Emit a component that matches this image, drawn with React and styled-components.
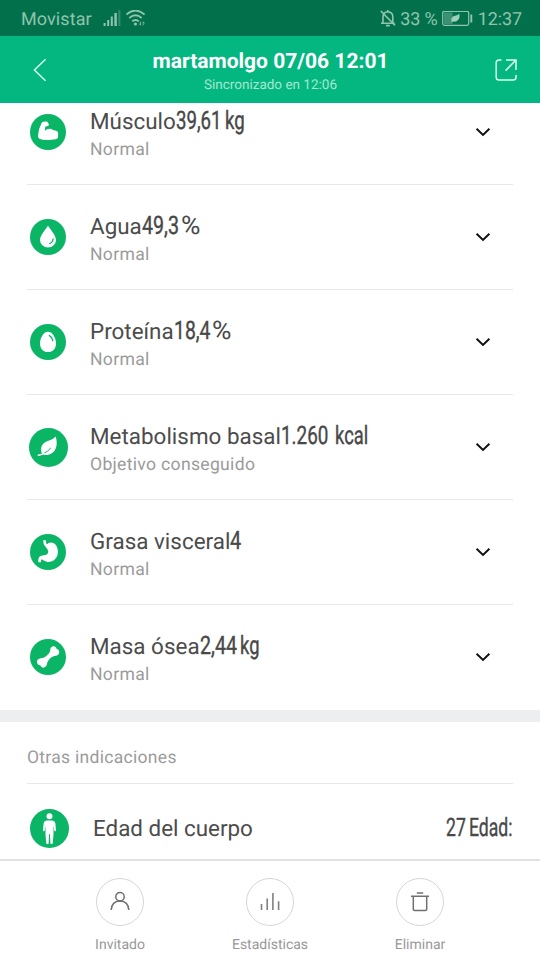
import React from 'react';
import styled, { createGlobalStyle } from 'styled-components';

const GlobalStyle = createGlobalStyle`
  * {
    box-sizing: border-box;
  }

  body {
    margin: 0;
    background: #fff;
    font-family: Roboto, 'Liberation Sans', sans-serif;
    text-rendering: geometricPrecision;
  }

  svg {
    display: block;
    flex-shrink: 0;
  }
`;

const Screen = styled.div`
  width: 540px;
  height: 960px;
  display: flex;
  flex-direction: column;
  overflow: hidden;
  background: #fff;
`;

// Phone status bar
const StatusBar = styled.div`
  height: 36px;
  flex-shrink: 0;
  display: flex;
  align-items: center;
  justify-content: space-between;
  padding: 2px 18px 0 21px;
  background: #02704b;
  color: #8fc4ae;
  font-size: 18px;
`;

const StatusGroup = styled.div`
  display: flex;
  align-items: center;
`;

const Carrier = styled.span`
  width: 82px;
  letter-spacing: 0.1px;
`;

const SignalSlot = styled.span`
  margin-right: 5px;
`;

const Percent = styled.span`
  margin: 0 4px 0 4px;
  letter-spacing: -0.1px;
`;

const Clock = styled.span`
  margin-left: 5px;
  letter-spacing: -0.1px;
`;

// Green header
const Header = styled.header`
  height: 67px;
  flex-shrink: 0;
  display: flex;
  align-items: center;
  justify-content: space-between;
  padding: 0 22px 0 31px;
  background: #04b67f;
`;

const HeaderText = styled.div`
  text-align: center;
  padding: 5px 2px 0 0;
`;

const HeaderTitle = styled.h1`
  margin: 0;
  color: #fff;
  font-size: 21px;
  line-height: 26px;
  font-weight: 700;
`;

const HeaderSub = styled.div`
  color: #a5e8cf;
  font-size: 13.5px;
  line-height: 20px;
`;

// Scrolled list of measurements
const Content = styled.main`
  flex: 1;
  min-height: 0;
  overflow: hidden;
`;

const MetricList = styled.div`
  margin-top: -23px;
  padding: 0 27px;
`;

const MetricRow = styled.div`
  height: 105px;
  display: flex;
  align-items: center;
  padding-right: 21px;
  border-bottom: 1px solid #e8e8e8;

  &:last-child {
    border-bottom-color: transparent;
  }
`;

const IconSlot = styled.div`
  width: ${(props) => props.$width || 63}px;
  display: flex;
  padding-left: ${(props) => props.$left || 0}px;
`;

const MetricText = styled.div`
  flex: 1;
  padding-top: 3px;
`;

const MetricTitle = styled.div`
  height: 28px;
  margin-bottom: 4px;
  display: flex;
  align-items: baseline;
  color: #4c4c4c;
  font-size: 22.4px;
  line-height: 28px;
`;

const MetricName = styled.span`
  letter-spacing: 0.02px;
`;

const MetricStatus = styled.div`
  color: #9b9b9b;
  font-size: 17.6px;
  line-height: 22px;
  letter-spacing: 0.3px;
`;

// Narrow figures, squeezed to the given width
const Narrow = styled.span`
  width: ${(props) => props.$width}px;
  margin-left: ${(props) => props.$gap || 0}px;
  color: #484848;
  font-size: 25.5px;
  line-height: 28px;
  white-space: nowrap;
  -webkit-text-stroke: ${(props) => (props.$scale < 1 ? 0.4 : 0)}px #484848;

  span {
    display: inline-block;
    transform: scaleX(${(props) => props.$scale});
    transform-origin: 0 50%;
  }
`;

const Band = styled.div`
  height: 12px;
  background: #edeef0;
`;

const Others = styled.section`
  padding: 0 27px;
`;

const OthersTitle = styled.h2`
  height: 62px;
  margin: 0;
  padding-top: 11px;
  border-bottom: 1px solid #e8e8e8;
  color: #9b9b9b;
  font-size: 17.5px;
  line-height: 50px;
  font-weight: 400;
  letter-spacing: 0.3px;
`;

const AgeRow = styled.div`
  height: 88px;
  display: flex;
  align-items: center;
  color: #4c4c4c;
  font-size: 22.4px;
`;

const AgeName = styled.div`
  flex: 1;
  padding-top: 2px;
`;

const AgeValue = styled.div`
  display: flex;
`;

// Bottom actions
const BottomBar = styled.footer`
  height: 101px;
  flex-shrink: 0;
  display: flex;
  justify-content: center;
  border-top: 2px solid #e1e1e1;
  background: #fff;
`;

const Action = styled.div`
  width: 150px;
  display: flex;
  flex-direction: column;
  align-items: center;
  padding-top: 17px;
`;

const ActionCircle = styled.div`
  width: 48px;
  height: 48px;
  border: 1px solid #d6d6d6;
  border-radius: 50%;
  display: flex;
  align-items: center;
  justify-content: center;
`;

const ActionLabel = styled.div`
  margin-top: 10px;
  color: #999;
  font-size: 14px;
  line-height: 18px;
`;

const NarrowText = ({ text, width, scale, gap }) => (
  <Narrow $width={width} $scale={scale} $gap={gap}>
    <span>{text}</span>
  </Narrow>
);

const Badge = ({ size = 36, children }) => (
  <svg width={size} height={size} viewBox={`${-size / 2} ${-size / 2} ${size} ${size}`}>
    <circle r={size / 2} fill="#0ab566" />
    {children}
  </svg>
);

const icons = {
  muscle: (
    <path
      fill="#fff"
      d="M-5.2 -10.2 L-1.4 -10.5 Q-.2 -10.3 .2 -9 L.9 -7.2 Q.9 -6.2 -.2 -6 L-2.8 -5.2 L-3.1 -1.2 Q-1 -3.4 2 -3.3 Q4.2 -3.1 5.4 -1.7 Q9.8 -1.6 10.1 1 V5 Q10 7 7.6 7.2 Q3 8.1 -1 8 Q-6 8 -8.6 6.8 Q-10.2 6 -10 3.8 Q-9.7 -3 -6.8 -8 Q-6.2 -9.7 -5.2 -10.2 Z"
    />
  ),
  water: (
    <>
      <path fill="#fff" d="M0 -11.2 C2.6 -7.4 8 -1.2 8 3 A8 7.4 0 0 1 -8 3 C-8 -1.2 -2.6 -7.4 0 -11.2 Z" />
      <path d="M1.8 6.6 Q4.6 5.5 5.1 2" fill="none" stroke="#0ab566" strokeWidth="1.3" strokeLinecap="round" />
    </>
  ),
  protein: (
    <>
      <path fill="#fff" d="M0 -10.3 C4.6 -10.3 8 -3.8 8 1.2 C8 6.6 4.8 10 0 10 C-4.8 10 -8 6.6 -8 1.2 C-8 -3.8 -4.6 -10.3 0 -10.3 Z" />
      <path d="M1.4 -6.4 Q4.2 -5 4.7 -1.5" fill="none" stroke="#0ab566" strokeWidth="1.4" strokeLinecap="round" />
    </>
  ),
  leaf: (
    <>
      <path fill="#fff" d="M7.2 -11 C9.4 -4 8.6 5.8 -1 7.4 Q-4.4 7.9 -6.5 6.5 C-9.2 -.8 -5.6 -4.8 0 -6.7 Q4.8 -8.2 7.2 -11 Z" />
      <path fill="none" stroke="#0ab566" strokeWidth="1" d="M-5.2 6.2 Q-.4 4 2.4 .4" />
      <path fill="none" stroke="#fff" strokeWidth="1.5" strokeLinecap="round" d="M-10.2 7.7 Q-7.2 7.5 -4.4 5.6" />
    </>
  ),
  stomach: (
    <>
      <path
        fill="#fff"
        d="M-1.6 -7.2 Q.8 -10 4.4 -9.3 C8.4 -8.2 9.9 -4 9.9 0 C9.8 6.2 5.4 10 0 9.9 C-3 9.7 -4.6 7.8 -6.2 7.2 Q-7.2 7.4 -7 10.2 H-9.7 Q-10.2 4.6 -6.8 3.8 C-3 3.2 .3 3 .2 -.4 Q-.1 -3.4 -2.4 -5 Z"
      />
      <path fill="none" stroke="#fff" strokeWidth="2.6" d="M-3.3 -11.8 Q-3.9 -7.7 -.8 -5.8" />
    </>
  ),
  bone: (
    <path
      fill="#fff"
      d="M2.2 -6.6 C2.2 -9.8 4.6 -11.2 6.6 -10.5 Q8.3 -9.9 8.6 -8.3 Q11.2 -7.5 11.3 -4.9 C11 -1.6 8.6 -1.2 6.2 -.9 Q3.2 0 1.3 2.2 Q-.7 4.6 -.9 6.6 C-1.3 9.6 -3.4 11.2 -5.6 10.6 Q-7 10.2 -7.5 8.5 Q-10.6 8.1 -11 5.3 C-11.2 2.7 -8.9 1.4 -6.8 1.3 Q-3.5 1 -1.4 -1.2 Q1.9 -3.6 2.2 -6.6 Z"
    />
  ),
  body: (
    <>
      <circle cx="0" cy="-12.2" r="3" fill="#fff" />
      <path
        fill="#fff"
        d="M-3 -8 H3 Q5.6 -7.6 5.9 -5 L6.5 2.2 Q5.7 3.3 4.8 2.3 L4 -3 V6 L3.2 15 Q2 16.2 .9 15 L.4 5.4 H-.4 L-.9 15 Q-2 16.2 -3.2 15 L-4 6 V-3 L-4.8 2.3 Q-5.7 3.3 -6.5 2.2 L-5.9 -5 Q-5.6 -7.6 -3 -8 Z"
      />
    </>
  ),
};

const metrics = [
  { icon: 'muscle', name: 'Músculo', status: 'Normal', value: ['39,61', 45, 0.73], unit: ['kg', 20, 0.73, 4.5] },
  { icon: 'water', name: 'Agua', status: 'Normal', value: ['49,3', 37, 0.77], unit: ['%', 20, 1.04, 2] },
  { icon: 'protein', name: 'Proteína', status: 'Normal', value: ['18,4', 36, 0.76], unit: ['%', 20, 1.04, 2] },
  { icon: 'leaf', size: 39, name: 'Metabolismo basal', status: 'Objetivo conseguido', value: ['1.260', 48, 0.74], unit: ['kcal', 34, 0.72, 6] },
  { icon: 'stomach', name: 'Grasa visceral', status: 'Normal', value: ['4', 11, 0.78] },
  { icon: 'bone', name: 'Masa ósea', status: 'Normal', value: ['2,44', 37, 0.77], unit: ['kg', 20, 0.72, 3] },
];

const Metric = ({ item }) => (
  <MetricRow>
    <IconSlot $left={item.size ? 1.5 : 3}>
      <Badge size={item.size}>{icons[item.icon]}</Badge>
    </IconSlot>
    <MetricText>
      <MetricTitle>
        <MetricName>{item.name}</MetricName>
        <NarrowText text={item.value[0]} width={item.value[1]} scale={item.value[2]} />
        {item.unit && (
          <NarrowText text={item.unit[0]} width={item.unit[1]} scale={item.unit[2]} gap={item.unit[3]} />
        )}
      </MetricTitle>
      <MetricStatus>{item.status}</MetricStatus>
    </MetricText>
    <svg width="18" height="12" viewBox="0 0 18 12" fill="none" stroke="#111" strokeWidth="2">
      <path d="M2.6 2.7 L9 8.9 L15.4 2.7" />
    </svg>
  </MetricRow>
);

const SignalIcon = () => (
  <svg width="18" height="18" viewBox="0 0 18 18" fill="#8fc4ae">
    <rect x="0.6" y="13" width="2" height="3" />
    <rect x="4.2" y="10" width="2" height="6" />
    <rect x="7.8" y="6.5" width="2" height="9.5" />
    <rect x="11.4" y="3" width="2.4" height="13" />
    <rect x="15.4" y="0" width="2" height="16" opacity="0.35" />
  </svg>
);

const WifiIcon = () => (
  <svg width="22" height="18" viewBox="0 1 22 18" fill="none" stroke="#8fc4ae" strokeWidth="1.8">
    <path d="M.4 5.5 Q9.5 -2.4 18.6 5.5" />
    <path d="M3.3 9 Q9.5 3.6 15.7 9" />
    <path d="M6.2 12.3 Q9.5 9.6 12.8 12.3" />
    <circle cx="9.4" cy="15" r="1.6" fill="#8fc4ae" stroke="none" />
    <path d="M14.5 12.6 v3.6 M13.2 14.6 l1.3 1.6 M17.2 16.4 v-3.6 M17.2 12.8 l1.3 1.6" strokeWidth="1" opacity="0.8" />
  </svg>
);

const MutedBellIcon = () => (
  <svg width="16" height="18" viewBox="0 1 16 18" fill="none" stroke="#8fc4ae" strokeWidth="1.6">
    <path d="M3 14 V7.5 Q3.2 3.2 7.8 2.8 Q12.6 3.2 12.8 7.5 V14 M1 14.2 H14.6 M7.8 2.8 V1 M6 16.6 H9.8" />
    <path d="M.8 2 L15 16.4" />
  </svg>
);

const BatteryIcon = () => (
  <svg width="31" height="16" viewBox="0 0.5 31 16" fill="none" stroke="#8fc4ae" strokeWidth="1.2">
    <rect x="0.7" y="0.8" width="26" height="14" rx="1.8" />
    <rect x="2" y="2" width="8.5" height="11.6" fill="#8fc4ae" stroke="none" opacity="0.4" />
    <path d="M9.6 12 Q8.2 6.2 13 5.2 Q16 4.8 17.4 3.2 Q18.6 10.6 12.4 11.2 L10.8 11 Z" fill="#9fd0bb" stroke="none" />
    <path d="M29.3 4 V12" strokeWidth="1.9" />
  </svg>
);

const App = () => {
  return (
    <>
      <GlobalStyle />
      <Screen>
        <StatusBar>
          <StatusGroup>
            <Carrier>Movistar</Carrier>
            <SignalSlot>
              <SignalIcon />
            </SignalSlot>
            <WifiIcon />
          </StatusGroup>
          <StatusGroup>
            <MutedBellIcon />
            <Percent>33 %</Percent>
            <BatteryIcon />
            <Clock>12:37</Clock>
          </StatusGroup>
        </StatusBar>

        <Header>
          <svg width="18" height="26" viewBox="0 0 18 26" fill="none" stroke="#d8fff0" strokeWidth="1.5">
            <path d="M14.6 2.2 L3.4 13 L14.6 23.8" />
          </svg>
          <HeaderText>
            <HeaderTitle>martamolgo 07/06 12:01</HeaderTitle>
            <HeaderSub>Sincronizado en 12:06</HeaderSub>
          </HeaderText>
          <svg width="24" height="24" viewBox="0 0 24 24" fill="none" stroke="#d8fff0" strokeWidth="1.5">
            <path d="M7.5 2 H5 Q2.2 2 2.2 4.8 V19.2 Q2.2 22 5 22 H19.2 Q22 22 22 19.2 V17" />
            <path d="M12 2 H22 V12 M22 2 L11.6 12.6" />
          </svg>
        </Header>

        <Content>
          <MetricList>
            {metrics.map((item) => (
              <Metric key={item.name} item={item} />
            ))}
          </MetricList>
          <Band />
          <Others>
            <OthersTitle>Otras indicaciones</OthersTitle>
            <AgeRow>
              <IconSlot $width={66} $left={3}>
                <Badge size={39}>{icons.body}</Badge>
              </IconSlot>
              <AgeName>Edad del cuerpo</AgeName>
              <AgeValue>
                <NarrowText text="27" width={20} scale={0.69} />
                <NarrowText text="Edad:" width={44} scale={0.69} gap={3} />
              </AgeValue>
            </AgeRow>
          </Others>
        </Content>

        <BottomBar>
          <Action>
            <ActionCircle>
              <svg width="22" height="22" viewBox="0 0 22 22" fill="none" stroke="#707070" strokeWidth="1.5">
                <circle cx="11" cy="5.7" r="4.2" />
                <path d="M2.2 19 Q2.7 10.3 11 10.1 Q19.3 10.3 19.8 19" />
              </svg>
            </ActionCircle>
            <ActionLabel>Invitado</ActionLabel>
          </Action>
          <Action>
            <ActionCircle>
              <svg width="22" height="22" viewBox="0 0 22 22" stroke="#808080" strokeWidth="1.6">
                <path d="M2.5 13 V19 M8.2 7.5 V19 M13.9 2 V19 M19.6 10.2 V19" />
              </svg>
            </ActionCircle>
            <ActionLabel>Estadísticas</ActionLabel>
          </Action>
          <Action>
            <ActionCircle>
              <svg width="22" height="22" viewBox="0 0 22 22" fill="none" stroke="#707070" strokeWidth="1.5">
                <path d="M7.8 2 H14.2 M2 5.3 H20 M4.3 5.3 V18.3 Q4.3 19.5 5.5 19.5 H16.5 Q17.7 19.5 17.7 18.3 V5.3" />
              </svg>
            </ActionCircle>
            <ActionLabel>Eliminar</ActionLabel>
          </Action>
        </BottomBar>
      </Screen>
    </>
  );
};

export default App;
